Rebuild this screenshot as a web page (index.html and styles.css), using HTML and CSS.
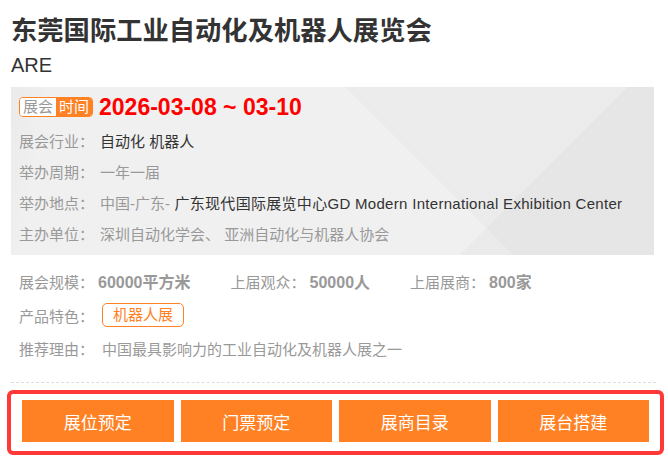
FILE: index.html
```html
<!DOCTYPE html>
<html lang="zh-CN">
<head>
<meta charset="utf-8">
<title>东莞国际工业自动化及机器人展览会</title>
<link rel="stylesheet" href="styles.css">
</head>
<body>
<div class="page">
  <h1 class="title">东莞国际工业自动化及机器人展览会</h1>
  <div class="subtitle">ARE</div>

  <div class="info">
    <div class="head">
      <span class="badge"><span class="b-l">展会</span><span class="b-r">时间</span></span>
      <span class="date">2026-03-08 ~ 03-10</span>
    </div>
    <div class="row"><span class="lbl">展会行业：</span><span class="dark">自动化 机器人</span></div>
    <div class="row"><span class="lbl">举办周期：</span><span class="gray">一年一届</span></div>
    <div class="row"><span class="lbl">举办地点：</span><span class="gray">中国-广东-</span><span class="dark wide">&nbsp;广东现代国际展览中心GD Modern International Exhibition Center</span></div>
    <div class="row"><span class="lbl">主办单位：</span><span class="gray">深圳自动化学会、 亚洲自动化与机器人协会</span></div>
  </div>

  <div class="stats">
    <div class="stat-row">
      <div class="stat"><span class="s-lbl">展会规模：</span><span class="s-val">60000平方米</span></div>
      <div class="stat"><span class="s-lbl">上届观众：</span><span class="s-val">50000人</span></div>
      <div class="stat"><span class="s-lbl">上届展商：</span><span class="s-val">800家</span></div>
    </div>
    <div class="tag-row"><span class="lbl2">产品特色：</span><span class="tag">机器人展</span></div>
    <div class="reason-row"><span class="lbl2">推荐理由：</span><span class="gray">中国最具影响力的工业自动化及机器人展之一</span></div>
  </div>

  <div class="divider"></div>

  <div class="actions">
    <a class="btn">展位预定</a>
    <a class="btn">门票预定</a>
    <a class="btn">展商目录</a>
    <a class="btn">展台搭建</a>
  </div>
</div>
</body>
</html>
```
FILE: styles.css
```css
* { box-sizing: border-box; }
html, body { margin: 0; padding: 0; background: #fff; }
body {
  font-family: "Liberation Sans", "Noto Sans CJK SC", sans-serif;
  font-size: 15px;
  color: #333;
}
.page { width: 668px; padding-top: 14px; }
.title {
  margin: 0 11px;
  font-size: 26.3px;
  line-height: 34px;
  font-weight: bold;
  color: #333;
}
.subtitle {
  margin: 4px 11px 0;
  font-size: 20px;
  line-height: 26px;
  color: #333;
}
.info {
  margin: 9px 14px 0 11px;
  height: 168px;
  padding: 10px 8px 5px;
  background-color: #f0f0f0;
  background-image:
    linear-gradient(135deg, rgba(0,0,0,0) 0 76%, rgba(0,0,0,0.025) 76%),
    linear-gradient(45deg, rgba(0,0,0,0) 0 62%, rgba(0,0,0,0.02) 62%),
    linear-gradient(100deg, rgba(0,0,0,0.025) 0, rgba(0,0,0,0) 6%);
}
.head {
  display: flex;
  align-items: center;
  height: 20px;
  margin-bottom: 9px;
}
.badge {
  display: inline-flex;
  height: 20px;
  border: 1px solid #ff8124;
  border-radius: 4px;
  overflow: hidden;
  font-size: 15px;
  line-height: 18px;
}
.b-l { padding: 0 3px; background: #fff; color: #999; }
.b-r { padding: 0 3px; background: #ff8124; color: #fff; }
.date {
  margin-left: 6px;
  font-size: 23px;
  line-height: 20px;
  font-weight: bold;
  color: #ff0000;
}
.row {
  display: flex;
  line-height: 31px;
  white-space: nowrap;
}
.lbl { width: 81px; flex: none; color: #999; }
.dark { color: #333; }
.gray { color: #999; }
.wide { letter-spacing: 0.3px; }

.stats { margin: 13px 0 0 19px; }
.stat-row { display: flex; gap: 40px; line-height: 30px; }
.s-lbl { color: #999; margin-right: 4px; }
.s-val { color: #999; font-weight: bold; font-size: 16px; }
.tag-row { display: flex; align-items: center; margin-top: 5px; height: 24px; }
.lbl2 { width: 83px; flex: none; color: #999; }
.tag {
  display: inline-block;
  height: 24px;
  padding: 0 10px;
  border: 1px solid #ff8124;
  border-radius: 5px;
  color: #ff8124;
  line-height: 22px;
}
.reason-row { display: flex; margin-top: 8px; line-height: 30px; }

.divider {
  margin: 17px 12px 0 11px;
  border-top: 1px dashed #ddd;
}
.actions {
  display: flex;
  gap: 7px;
  margin: 7px 4px 0 7px;
  padding: 6px 11px 9px;
  border: 4px solid #ff3838;
  border-radius: 6px;
}
.btn {
  flex: 1;
  height: 42px;
  background: #ff8124;
  color: #fff;
  font-size: 17px;
  display: flex;
  align-items: center;
  justify-content: center;
  text-decoration: none;
}
```
